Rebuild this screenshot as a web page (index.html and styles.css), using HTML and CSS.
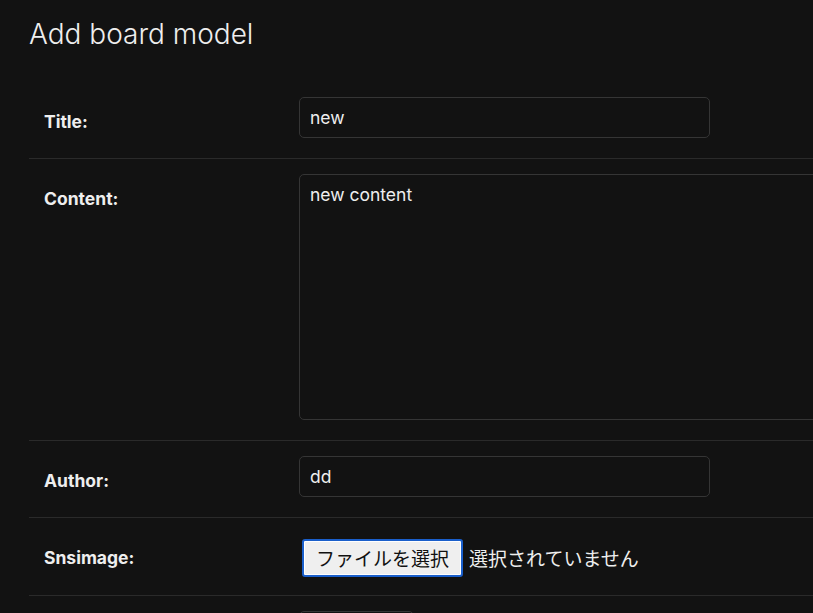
FILE: index.html
```html
<!DOCTYPE html>
<html lang="ja">
<head>
<meta charset="utf-8">
<title>Add board model</title>
<link rel="stylesheet" href="styles.css">
</head>
<body>
<main class="content">
  <h1 class="page-title">Add board model</h1>
  <form class="form">
    <div class="form-row">
      <label class="row-label" for="title">Title:</label>
      <input class="text-input" id="title" type="text" value="new">
    </div>
    <div class="form-row">
      <label class="row-label" for="content">Content:</label>
      <textarea class="text-area" id="content">new content</textarea>
    </div>
    <div class="form-row">
      <label class="row-label" for="author">Author:</label>
      <input class="text-input" id="author" type="text" value="dd">
    </div>
    <div class="form-row file-row">
      <label class="row-label">Snsimage:</label>
      <div class="file-field">
        <button type="button" class="file-btn">ファイルを選択</button>
        <span class="file-status">選択されていません</span>
      </div>
    </div>
    <div class="form-row">
      <span class="row-label"></span>
      <input class="short-input" type="text" aria-label="next field">
    </div>
  </form>
</main>
</body>
</html>
```

FILE: styles.css
```css
html, body {
  margin: 0;
  padding: 0;
  background: #121212;
  color: #eeeeee;
  font-family: Inter, "Noto Sans", sans-serif;
  overflow: hidden;
}

.content {
  padding-left: 29px;
}

.page-title {
  margin: 18px 0 30px;
  font-size: 28px;
  font-weight: 300;
  line-height: 1.2;
  color: #eeeeee;
}

.form {
  display: flex;
  flex-direction: column;
}

.form-row {
  display: flex;
  align-items: flex-start;
  padding: 15px 0 20px 15px;
  border-bottom: 1px solid #2a2a2a;
}

.row-label {
  flex: 0 0 255px;
  padding-top: 15px;
  font-size: 17.5px;
  line-height: 20px;
  font-weight: 700;
  color: #eeeeee;
}

.text-input,
.text-area,
.short-input {
  box-sizing: border-box;
  background: #121212;
  color: #eeeeee;
  border: 1px solid #353535;
  border-radius: 5px;
  font-family: Inter, "Noto Sans", sans-serif;
  font-size: 17.5px;
  outline: none;
}

.text-input {
  width: 411px;
  height: 41px;
  padding: 0 10px;
}

.text-area {
  width: 560px;
  height: 246px;
  padding: 9px 10px;
  line-height: 21px;
  resize: none;
  margin-right: -60px;
}

.short-input {
  width: 115px;
  height: 41px;
}

.file-row {
  padding-top: 21px;
  padding-bottom: 18px;
}

.file-row .row-label {
  padding-top: 9px;
}

.file-field {
  display: flex;
  align-items: center;
  gap: 6px;
  padding-left: 3px;
}

.file-btn {
  box-sizing: border-box;
  height: 38px;
  width: 161px;
  padding: 0;
  background: #efefef;
  color: #111111;
  border: 2px solid #1a5fcb;
  border-radius: 3px;
  box-shadow: inset 0 0 0 1px #ffffff;
  font-family: "Noto Sans CJK JP", sans-serif;
  font-size: 19px;
}

.file-status {
  font-family: "Noto Sans CJK JP", sans-serif;
  font-size: 19px;
  color: #eeeeee;
}
```
